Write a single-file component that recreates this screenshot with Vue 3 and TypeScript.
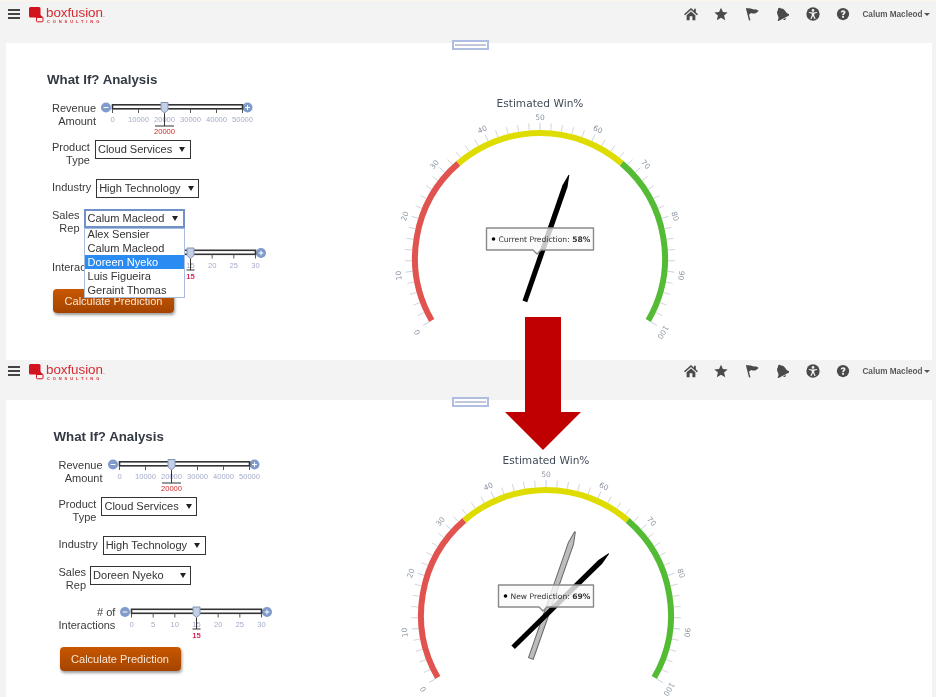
<script setup lang="ts">
interface Needle { value: number; fill: string; stroke: string }
interface Screen {
  id: string
  rep: string
  open: boolean
  tipLabel: string
  tipValue: string
  tipHalf: number
  needles: Needle[]
}
interface Slider { min: number; max: number; step: number; value: number; mark: number }

const screens: Screen[] = [
  { id: 'current', rep: 'Calum Macleod', open: true, tipLabel: 'Current Prediction:', tipValue: '58%', tipHalf: 53.5,
    needles: [{ value: 58, fill: '#000', stroke: 'none' }] },
  { id: 'next', rep: 'Doreen Nyeko', open: false, tipLabel: 'New Prediction:', tipValue: '69%', tipHalf: 47.5,
    needles: [{ value: 58, fill: '#bdbdbd', stroke: '#666' }, { value: 69, fill: '#000', stroke: 'none' }] },
]

const reps = ['Alex Sensier', 'Calum Macleod', 'Doreen Nyeko', 'Luis Figueira', 'Geraint Thomas']
const revenue: Slider = { min: 0, max: 50000, step: 10000, value: 20000, mark: 19 }
const interactions: Slider = { min: 0, max: 30, step: 5, value: 15, mark: 12 }

const cx = 170
const cy = 165
const angle = (v: number) => (v - 50) * 2.4
const polar = (v: number, r: number) => {
  const a = (angle(v) * Math.PI) / 180
  return { x: cx + r * Math.sin(a), y: cy - r * Math.cos(a) }
}
const arc = (a: number, b: number) => {
  const s = polar(a, 125)
  const e = polar(b, 125)
  return `M${s.x} ${s.y}A125 125 0 0 1 ${e.x} ${e.y}`
}
const bands = [
  { path: arc(0, 33), color: '#e0534f' },
  { path: arc(33, 67), color: '#dedc00' },
  { path: arc(67, 100), color: '#54bb35' },
]
const ticks = Array.from({ length: 51 }, (_, i) => {
  const v = i * 2
  const a = polar(v, 128)
  const b = polar(v, 135)
  return { v, x1: a.x, y1: a.y, x2: b.x, y2: b.y, major: v % 10 === 0 }
})
const labels = Array.from({ length: 11 }, (_, i) => {
  const v = i * 10
  const p = polar(v, 142)
  const drop = 1 + 1.5 * (1 - Math.cos((angle(v) * Math.PI) / 180))
  return { v, x: p.x, y: p.y + drop, rot: angle(v) }
})
const needlePoints = '-2.5,46 2.5,46 2.7,-76 0.4,-88 -0.4,-88 -2.7,-76'
const needleTransform = (v: number) => `translate(${cx} ${cy}) rotate(${angle(v)})`
const tooltipPath = (h: number) =>
  `M${cx - h} ${cy - 30}H${cx + h}V${cy - 8}H${cx + 1}L${cx - 3} ${cy - 4}L${cx - 7} ${cy - 8}H${cx - h}Z`

const sliderStops = (s: Slider) => {
  const out: { v: number; x: number }[] = []
  for (let v = s.min; v <= s.max; v += s.step) out.push({ v, x: 11.5 + ((v - s.min) / (s.max - s.min)) * 130 })
  return out
}
const thumbX = (s: Slider) => 11.5 + ((s.value - s.min) / (s.max - s.min)) * 130
</script>

<template>
  <div class="page">
    <section v-for="screen in screens" :key="screen.id" class="screen" :class="screen.id">
      <header class="topbar">
        <div class="burger"><i></i><i></i><i></i></div>
        <div class="logo">
          <svg class="logo-mark" width="15" height="16" viewBox="0 0 15 16">
            <path d="M1.5 0H10Q11.5 0 11.5 1.5V7.5L13 10V11H8.5L6.5 10.5H1.5Q0 10.5 0 9V1.5Q0 0 1.5 0Z" fill="#d2121c" />
            <rect x="7.5" y="9.8" width="6.5" height="5" rx="1" fill="none" stroke="#d2121c" />
          </svg>
          <div class="logo-text">
            <span class="logo-name">boxfusion<small>.</small></span>
            <span class="logo-sub">CONSULTING</span>
          </div>
        </div>
        <nav class="tools">
          <svg class="tool" viewBox="0 0 16 16"><path d="M8 1L0 8.2 1.2 9.4 8 3.4 14.8 9.4 16 8.2 13.5 6V2H11.5V4.2Z M3 9.4L8 5 13 9.4V15H9.6V10.6H6.4V15H3Z" /></svg>
          <svg class="tool" viewBox="0 0 16 16"><path d="M8 .8L10.2 5.7 15.6 6.2 11.5 9.7 12.8 15 8 12.2 3.2 15 4.5 9.7 .4 6.2 5.8 5.7Z" /></svg>
          <svg class="tool" viewBox="0 0 16 16"><path d="M1 1.5L2.6 1 6.2 15 4.6 15.4Z M2.6 1.8C6 .2 8.5 3.6 12.2 2.6L15.6 4.2C13.5 7 10.5 8.6 7.2 6.8L4.4 8.8Z" /></svg>
          <svg class="tool" viewBox="0 0 16 16"><g transform="rotate(-28 8 8)"><path d="M8 .2C9 .2 9.8 .9 9.8 1.8 12.2 2.6 13 5 13 7.4 13 9.8 14 11 15.8 12.2V13.2H.2V12.2C2 11 3 9.8 3 7.4 3 5 3.8 2.6 6.2 1.8 6.2 .9 7 .2 8 .2Z M6.2 14H9.8C9.6 15 8.9 15.6 8 15.6 7.1 15.6 6.4 15 6.2 14Z" /></g></svg>
          <svg class="tool" viewBox="0 0 16 16">
            <circle cx="8" cy="8" r="7.6" />
            <circle cx="8" cy="3.9" r="1.5" fill="#f3f3f3" />
            <path d="M3.4 5.6L8 6.4 12.6 5.6 12.9 6.7 9.4 7.8V9.6L11 13.4 9.9 13.9 8 10.2 6.1 13.9 5 13.4 6.6 9.6V7.8L3.1 6.7Z" fill="#f3f3f3" />
          </svg>
          <svg class="tool" viewBox="0 0 16 16">
            <circle cx="8" cy="8" r="7" />
            <path d="M5.4 6.1C5.5 4.5 6.6 3.6 8.2 3.6 9.8 3.6 10.9 4.6 10.9 6 10.9 7.6 9.1 7.9 9 9.4H7.1C7.1 7.3 8.8 7 8.8 6 8.8 5.6 8.5 5.3 8 5.3 7.5 5.3 7.2 5.7 7.2 6.3Z M7 10.2H9.1V12.2H7Z" fill="#f3f3f3" />
          </svg>
          <span class="user">Calum Macleod</span>
          <span class="user-caret"></span>
        </nav>
      </header>

      <main class="card">
        <div class="handle"><i></i></div>
        <div class="form">
          <h1 class="title">What If? Analysis</h1>

          <div class="row row-revenue">
            <div class="label">Revenue<br />Amount</div>
            <svg class="slider" width="154" height="38" viewBox="0 0 154 38">
              <circle cx="5" cy="6.5" r="5" fill="#7f9bcb" />
              <path d="M2.6 6.5H7.4" stroke="#fff" />
              <circle cx="146.5" cy="6.5" r="5" fill="#7f9bcb" />
              <path d="M144.1 6.5H148.9M146.5 4.1V8.9" stroke="#fff" />
              <rect x="11.5" y="3.8" width="130" height="4" fill="#fff" stroke="#333" stroke-width="1.6" />
              <template v-for="t in sliderStops(revenue)" :key="t.v">
                <path :d="`M${t.x} 8V12`" stroke="#555" />
                <text :x="t.x" y="20.6" class="slider-num" text-anchor="middle">{{ t.v }}</text>
              </template>
              <path :d="`M${thumbX(revenue)} 8V25M${thumbX(revenue) - revenue.mark / 2} 25H${thumbX(revenue) + revenue.mark / 2}`" stroke="#333" />
              <path :d="`M${thumbX(revenue) - 3.5} 1.5H${thumbX(revenue) + 3.5}V9L${thumbX(revenue)} 12 ${thumbX(revenue) - 3.5} 9Z`" fill="#c3cfe5" stroke="#8494b5" />
              <text :x="thumbX(revenue)" y="33" class="slider-mark" text-anchor="middle">{{ revenue.value }}</text>
            </svg>
          </div>

          <div class="row row-product">
            <div class="label">Product<br />Type</div>
            <div class="select"><span>Cloud Services</span><b></b></div>
          </div>

          <div class="row row-industry">
            <div class="label">Industry</div>
            <div class="select"><span>High Technology</span><b></b></div>
          </div>

          <div class="row row-rep">
            <div class="label">Sales<br />Rep</div>
            <div class="select select-rep" :class="{ focused: screen.open }">
              <span>{{ screen.rep }}</span><b></b>
              <ul v-if="screen.open" class="options">
                <li v-for="r in reps" :key="r" :class="{ active: r === 'Doreen Nyeko' }">{{ r }}</li>
              </ul>
            </div>
          </div>

          <div class="row row-interactions">
            <div class="label">
              # of<br />
              Interactions
            </div>
            <svg class="slider" width="154" height="38" viewBox="0 0 154 38">
              <circle cx="5" cy="6" r="5" fill="#7f9bcb" />
              <path d="M2.6 6H7.4" stroke="#fff" />
              <circle cx="147" cy="6" r="5" fill="#7f9bcb" />
              <path d="M144.6 6H149.4M147 3.6V8.4" stroke="#fff" />
              <rect x="11.5" y="3.3" width="130" height="4" fill="#fff" stroke="#333" stroke-width="1.6" />
              <template v-for="t in sliderStops(interactions)" :key="t.v">
                <path :d="`M${t.x} 7.5V11.5`" stroke="#555" />
                <text :x="t.x" y="21" class="slider-num" text-anchor="middle">{{ t.v }}</text>
              </template>
              <path :d="`M${thumbX(interactions)} 8V23M${thumbX(interactions) - interactions.mark / 2 + 2} 23H${thumbX(interactions) + interactions.mark / 2 - 2}`" stroke="#333" />
              <path :d="`M${thumbX(interactions) - 3.5} 1H${thumbX(interactions) + 3.5}V8.5L${thumbX(interactions)} 11.5 ${thumbX(interactions) - 3.5} 8.5Z`" fill="#c3cfe5" stroke="#8494b5" />
              <text :x="thumbX(interactions)" y="32" class="slider-mark hot" text-anchor="middle">{{ interactions.value }}</text>
            </svg>
          </div>

          <button class="calc" type="button">Calculate Prediction</button>
        </div>

        <svg class="gauge" width="340" height="255" viewBox="0 0 340 255">
          <text :x="cx" y="14" class="gauge-title" text-anchor="middle">Estimated Win%</text>
          <line
            v-for="t in ticks"
            :key="t.v"
            :x1="t.x1" :y1="t.y1" :x2="t.x2" :y2="t.y2"
            :stroke="t.major ? '#b9cde2' : '#cfcfcf'"
            stroke-width="0.9"
          />
          <path v-for="b in bands" :key="b.color" :d="b.path" :stroke="b.color" stroke-width="6" fill="none" />
          <text
            v-for="l in labels"
            :key="l.v"
            class="gauge-num"
            text-anchor="middle"
            dominant-baseline="central"
            :transform="`translate(${l.x} ${l.y}) rotate(${l.rot})`"
          >{{ l.v }}</text>
          <polygon
            v-for="(nd, i) in screen.needles"
            :key="i"
            :points="needlePoints"
            :transform="needleTransform(nd.value)"
            :fill="nd.fill"
            :stroke="nd.stroke"
          />
          <path :d="tooltipPath(screen.tipHalf)" class="tip" />
          <circle :cx="cx - screen.tipHalf + 7" :cy="cy - 19" r="1.8" fill="#000" />
          <text :x="cx - screen.tipHalf + 12" :y="cy - 16.2" class="tip-text">
            {{ screen.tipLabel }} <tspan font-weight="700">{{ screen.tipValue }}</tspan>
          </text>
        </svg>
      </main>
    </section>

    <svg class="arrow" width="76" height="133" viewBox="0 0 76 133">
      <polygon points="20,0 56,0 56,95 76,95 38,133 0,95 20,95" fill="#c00000" />
    </svg>
  </div>
</template>

<style>
html, body { margin: 0; background: #f3f3f3; }
</style>

<style scoped>
.page {
  position: relative;
  width: 936px;
  height: 697px;
  overflow: hidden;
  background: #f3f3f3;
  font-family: "Liberation Sans", Arial, sans-serif;
  color: #333;
  filter: blur(0.35px);
}
.screen { display: flex; flex-direction: column; }
.current { height: 360px; border-top: 1px solid #fbf6e6; box-sizing: border-box; }
.next { height: 337px; }

.topbar {
  display: flex;
  align-items: center;
  padding: 0 6.5px 0 8px;
  flex: none;
  box-sizing: border-box;
}
.current .topbar { height: 26px; margin-bottom: 16px; }
.next .topbar { height: 22px; margin-bottom: 18px; }

.burger { display: flex; flex-direction: column; gap: 1.7px; width: 12px; margin-right: 9px; }
.burger i { display: block; height: 2.3px; background: #444; }
.logo { display: flex; align-items: flex-start; margin-top: 3px; }
.logo-mark { flex: none; }
.logo-text { display: flex; flex-direction: column; margin-left: 2px; color: #d52a30; }
.logo-name { font-size: 13.4px; line-height: 11px; letter-spacing: -0.05px; }
.logo-name small { font-size: 7px; }
.logo-sub { font-size: 4px; line-height: 5px; letter-spacing: 2.9px; font-weight: 700; margin: -1.5px 0 0 1px; }

.tools { margin-left: auto; display: flex; align-items: center; gap: 16.5px; }
.tool { width: 14px; height: 14px; fill: #4a4a4a; flex: none; }
.user { font-size: 8.2px; font-weight: 700; color: #5a5a5a; margin-left: -4.5px; white-space: nowrap; }
.user-caret {
  margin-left: -15.5px;
  border: 3.5px solid transparent;
  border-top-color: #555;
  border-bottom-width: 0;
}

.card {
  position: relative;
  flex: 1;
  margin: 0 4px 0 6px;
  background: #fff;
  display: flex;
  align-items: flex-start;
  min-height: 0;
}
.handle {
  position: absolute;
  left: 446px;
  top: -3px;
  width: 31px;
  height: 6px;
  border: 2px solid #aebde0;
  background: #fff;
  display: flex;
  align-items: center;
  padding: 0 1px;
}
.handle i { display: block; height: 2px; width: 100%; background: #c1c6d8; }

.form { width: 320px; padding-left: 41px; flex: none; }
.next .form { padding-left: 47.5px; width: 319.5px; }
.gauge { margin-left: 2.5px; }

.title {
  margin: 29px 0 12.5px;
  font-size: 13.3px;
  line-height: 16px;
  font-weight: 700;
  color: #333a44;
}
.row { display: flex; align-items: flex-start; gap: 5px; padding-left: 5px; font-size: 11px; }
.row-revenue { height: 39px; }
.row-product { height: 39px; }
.row-industry { height: 30px; }
.row-rep { height: 39px; }
.current .row-rep { height: 38px; }
.row-interactions { height: 42px; }
.next .row-interactions .slider { margin-top: 1px; }
.label { text-align: right; line-height: 13px; padding-top: 1px; white-space: nowrap; color: #3a3a3a; }
.row-industry .label { padding-top: 2px; }
.row-rep .label { padding-top: 0; margin-right: -1px; }
.slider { flex: none; display: block; overflow: visible; }
.slider-num { font-size: 7.6px; fill: #a4abc9; font-family: "Liberation Sans", Arial, sans-serif; }
.slider-mark { font-size: 7.6px; fill: #cf2a2a; font-family: "Liberation Sans", Arial, sans-serif; }
.slider-mark.hot { fill: #dc2a5a; font-weight: 700; }

.select {
  position: relative;
  display: flex;
  align-items: center;
  justify-content: space-between;
  gap: 7px;
  height: 19px;
  box-sizing: border-box;
  padding: 0 4.5px 0 2px;
  border: 1.5px solid #333;
  background: #fff;
  font-size: 11.05px;
  white-space: nowrap;
}
.select b {
  border: 3px solid transparent;
  border-top: 5px solid #222;
  border-bottom: 0;
}
.select-rep { width: 101px; }
.select-rep.focused { border: 2px solid #6f91c8; }
.options {
  position: absolute;
  left: -2px;
  right: -2px;
  top: 17px;
  margin: 0;
  padding: 0;
  list-style: none;
  background: #fff;
  border: 1px solid #a8bce0;
  box-sizing: border-box;
  z-index: 2;
}
.options li { height: 14px; line-height: 14px; padding-left: 3px; }
.options li:first-child { height: 12px; line-height: 10px; }
.options li.active { background: #2a8cf2; color: #fff; }

.calc {
  display: block;
  margin-left: 6px;
  width: 121px;
  height: 24px;
  border: 0;
  padding: 0;
  border-radius: 4px;
  color: #f6e6d6;
  font: 11px "Liberation Sans", Arial, sans-serif;
  background: linear-gradient(#c85700, #a44400);
  box-shadow: 1px 2px 3px rgba(0, 0, 0, 0.4);
}

.gauge { flex: none; margin-top: 50px; display: block; overflow: visible; }
.gauge-title { font-family: "DejaVu Sans", sans-serif; font-size: 10.6px; fill: #3f4a57; }
.gauge-num { font-family: "DejaVu Sans", sans-serif; font-size: 7.5px; fill: #8f98a5; }
.tip { fill: rgba(250, 250, 250, 0.8); stroke: #8a8a8a; stroke-width: 1.4; stroke-linejoin: round; }
.tip-text { font-family: "DejaVu Sans", sans-serif; font-size: 7.6px; fill: #333; }

.arrow { position: absolute; left: 505px; top: 317px; }
</style>
